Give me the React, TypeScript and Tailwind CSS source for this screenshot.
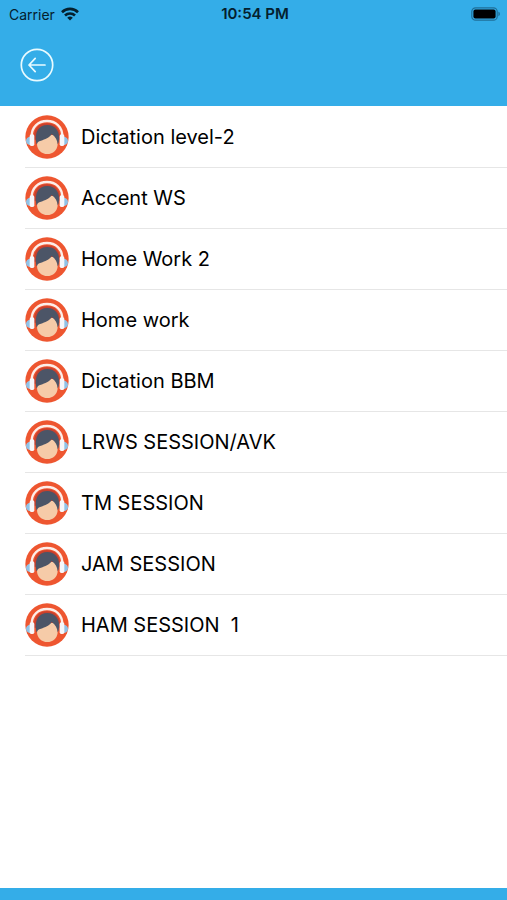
const sessions = [
  'Dictation level-2',
  'Accent WS',
  'Home Work 2',
  'Home work',
  'Dictation BBM',
  'LRWS SESSION/AVK',
  'TM SESSION',
  'JAM SESSION',
  'HAM SESSION  1',
];

function WifiIcon() {
  return (
    <svg viewBox="0 0 18 14" className="h-[14px] w-[18px]" aria-hidden="true">
      <g fill="none" stroke="#04202e" strokeWidth="2.6">
        <path d="M1 5.2a11.4 11.4 0 0 1 16 0" />
        <path d="M4 8.5a7.1 7.1 0 0 1 10 0" />
      </g>
      <path d="M9 13.6 6.2 10.8a4 4 0 0 1 5.6 0z" fill="#04202e" />
    </svg>
  );
}

function BatteryIcon() {
  return (
    <svg viewBox="0 0 30 14" className="h-[14px] w-[30px]" aria-hidden="true">
      <rect x="0.8" y="0.8" width="25.4" height="12.4" rx="3.8" fill="none" stroke="#1f6f98" strokeWidth="1.2" />
      <rect x="2.4" y="2.4" width="22.2" height="9.2" rx="2" fill="#000" />
      <path d="M27.4 4.8c2 .6 2 3.8 0 4.4z" fill="#1f6f98" />
    </svg>
  );
}

function Avatar() {
  return (
    <svg viewBox="0 0 132 132" className="size-11 shrink-0" aria-hidden="true">
      <circle cx="66" cy="66" r="65" fill="#ee5630" />
      {/* headband */}
      <path d="M20 64C20 35 40 18 66 18s46 17 46 46" fill="none" stroke="#fdeee9" strokeWidth="7" />
      <path d="M27 74C25 42 40 25 66 25s41 17 39 49z" fill="#c9402d" />
      {/* face with the hair over it */}
      <path d="M36 60h62v26c0 18-14 31-31 31S36 104 36 86z" fill="#f6cba8" />
      <path d="M34 86C27 50 42 30 67 30s40 20 34 52l-3 6c-1-11-6-23-18-31-7 12-20 16-32 20-8 2-11 5-12 11z" fill="#4c5567" />
      {/* ear cups */}
      <path d="M15 65v25C7 89 3 84 3 78s4-12 12-13zM117 65v25c8-1 12-6 12-12s-4-12-12-13z" fill="#8fc3e8" />
      <rect x="14" y="58" width="14" height="35" rx="5" fill="#f7f7fa" />
      <rect x="104" y="58" width="14" height="35" rx="5" fill="#f7f7fa" />
    </svg>
  );
}

function StatusBar() {
  return (
    <div className="grid h-7 grid-cols-3 items-center pr-[6px] pl-[9px] text-[#04202e]">
      <div className="flex items-center gap-[6px] text-[14px]">
        <span>Carrier</span>
        <WifiIcon />
      </div>
      <time className="text-center text-[15px] font-semibold whitespace-nowrap">10:54 PM</time>
      <div className="flex justify-end">
        <BatteryIcon />
      </div>
    </div>
  );
}

export default function App() {
  return (
    <div className="flex min-h-screen flex-col bg-white font-['Inter','Liberation_Sans',sans-serif]">
      <header className="h-[106px] bg-[#34ade8]">
        <StatusBar />
        <div className="px-5 pt-5">
          <button type="button" aria-label="Back" className="block rounded-full">
            <svg viewBox="0 0 34 34" className="size-[34px]" fill="none" stroke="#e9fbff" strokeWidth="1.7" strokeLinecap="round" strokeLinejoin="round">
              <circle cx="17" cy="17" r="15.7" />
              <path d="M25 17H9M15.2 10.4 9 17l6.2 6.6" />
            </svg>
          </button>
        </div>
      </header>

      <main className="flex-1">
        <ul className="pt-px pl-[25px]">
          {sessions.map((name) => (
            <li key={name} className="flex h-[61px] items-center gap-3 border-b border-[#e6e6e6]">
              <Avatar />
              <span className="text-[20px] whitespace-pre text-black">{name}</span>
            </li>
          ))}
        </ul>
      </main>

      <footer className="h-3 bg-[#34ade8]" />
    </div>
  );
}
